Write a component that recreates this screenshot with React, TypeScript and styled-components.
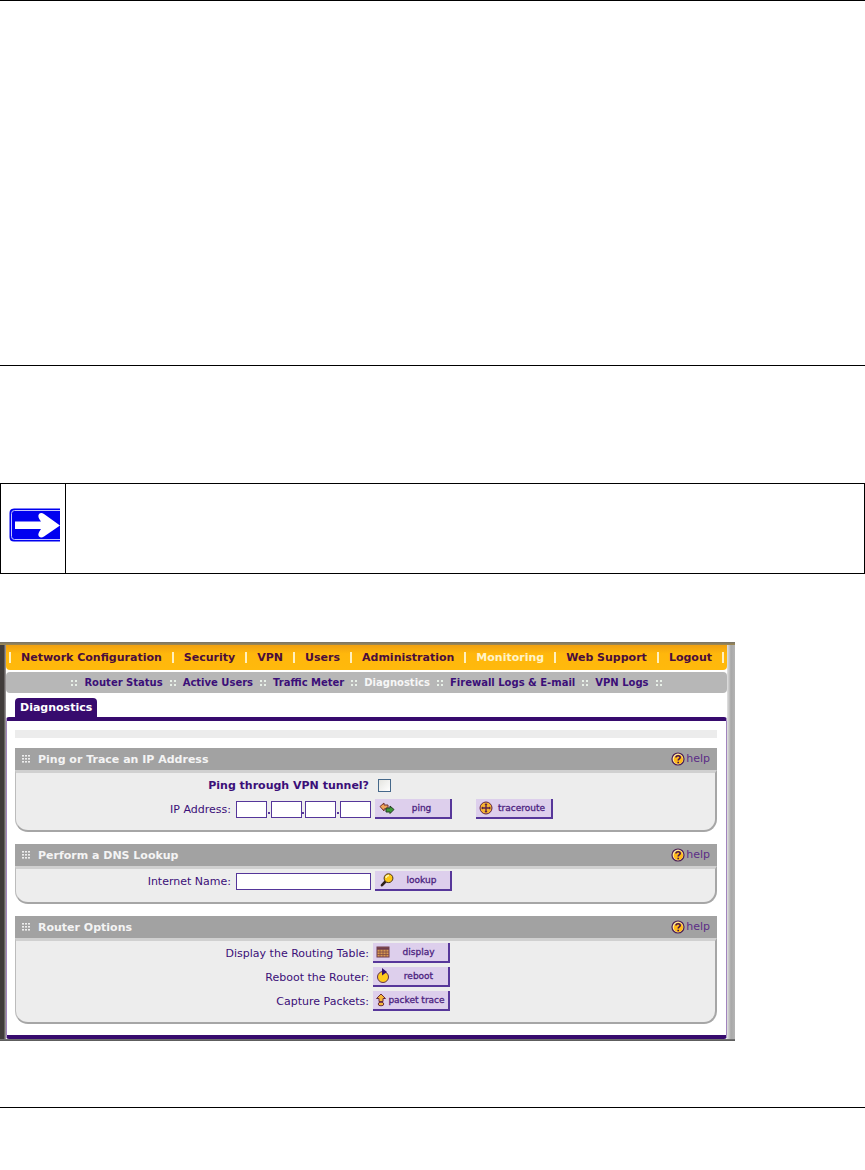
import React from "react";
import styled, { createGlobalStyle } from "styled-components";

const purple = "#3b0f78";
const deepPurple = "#370b6e";
const sans = `Verdana, "DejaVu Sans", sans-serif`;

const GlobalStyle = createGlobalStyle`
  *, *::before, *::after { box-sizing: border-box; }
  body { margin: 0; background: #fff; font-family: ${sans}; font-size: 11px; line-height: 16px; color: ${purple}; }
`;

const Page = styled.main`
  display: flex;
  flex-direction: column;
  padding-bottom: 62px;
`;

const Rule = styled.hr<{ $before?: number }>`
  width: 100%;
  height: 1px;
  margin: ${(p) => p.$before ?? 0}px 0 0;
  border: 0;
  background: #000;
`;

const Note = styled.aside`
  display: grid;
  grid-template-columns: 65px 1fr;
  min-height: 91px;
  margin-top: 117px;
  border: 1px solid #000;
`;

const NoteIcon = styled.div`
  display: flex;
  align-items: center;
  padding-left: 8px;
  padding-bottom: 6px;
  border-right: 1px solid #000;
`;

const Frame = styled.section`
  width: 100%;
  max-width: 735px;
  margin-top: 68px;
  padding: 3px 8px 2px 6px;
  background:
    linear-gradient(#777268, #a08a50) top / 100% 3px no-repeat,
    linear-gradient(#777, #555) bottom / 100% 2px no-repeat,
    linear-gradient(90deg, #e2e2e2, #a8a8a8 50%, #b4b4b4) right / 8px 100% no-repeat,
    linear-gradient(90deg, #403c3a 60%, #a8a4a6) left / 6px 100% no-repeat,
    #fff;
`;

const MainNav = styled.nav`
  display: flex;
  align-items: center;
  justify-content: space-between;
  height: 25px;
  padding: 0 3px;
  background: linear-gradient(#f0a010, #ffb70c 35%, #ffb90c);
  border-radius: 0 0 4px 4px;
`;

const Divider = styled.span`
  width: 2px;
  height: 11px;
  background: #fff0c0;
`;

const NavLink = styled.a<{ $active?: boolean }>`
  font-size: 11px;
  font-weight: bold;
  line-height: 16px;
  white-space: nowrap;
  text-decoration: none;
  color: ${(p) => (p.$active ? "#fff3c8" : "#4a0d3c")};
`;

const SubNav = styled.nav`
  display: flex;
  align-items: center;
  justify-content: center;
  gap: 6px;
  height: 21px;
  margin-top: 2px;
  background: #b7b7b7;
  border-radius: 4px;
`;

const SubLink = styled.a<{ $active?: boolean }>`
  font-size: 10px;
  font-weight: bold;
  line-height: 16px;
  white-space: nowrap;
  text-decoration: none;
  color: ${(p) => (p.$active ? "#f6f6f6" : purple)};
`;

const TabRow = styled.div`
  display: flex;
  padding: 5px 9px 0;
  background: #fff;
`;

const Tab = styled.h1`
  margin: 0;
  padding: 2px 5px 1px;
  border-radius: 4px 4px 0 0;
  background: ${deepPurple};
  color: #fff;
  font-size: 11px;
  line-height: 16px;
`;

const Content = styled.div`
  display: flex;
  flex-direction: column;
  gap: 12px;
  padding: 9px 9px 11px 8px;
  background: #fff;
  border: solid #a184bd;
  border-width: 0 1px;
  border-top: 4px solid ${deepPurple};
  border-bottom: 4px solid ${deepPurple};
  border-radius: 3px;
`;

const Strip = styled.div`
  height: 8px;
  margin-bottom: -2px;
  background: #ececec;
`;

const PanelHead = styled.header`
  display: flex;
  align-items: center;
  gap: 8px;
  height: 22px;
  padding: 0 7px;
  background: #a2a2a2;
`;

const PanelTitle = styled.h2`
  flex: 1;
  margin: 0;
  padding-top: 2px;
  color: #f4f4f4;
  font-size: 11px;
  line-height: 16px;
`;

const HelpLink = styled.a`
  display: flex;
  align-items: center;
  gap: 1px;
  color: #5b2d86;
  font-size: 11px;
  text-decoration: none;
`;

const PanelBody = styled.form`
  padding-bottom: 9px;
  background: #ededed;
  border-style: solid;
  border-width: 3px 2px 2px 1px;
  border-color: #d0d0d0 #a6a6a6 #a6a6a6 #bcbcbc;
  border-radius: 0 0 13px 13px;
`;

const Row = styled.div`
  display: flex;
  align-items: center;
  height: 24px;
`;

const Label = styled.label<{ $wide?: boolean; $strong?: boolean }>`
  flex: 0 0 ${(p) => (p.$wide ? 353 : 215)}px;
  padding-top: 2px;
  text-align: right;
  font-weight: ${(p) => (p.$strong ? "bold" : "normal")};
`;

const Check = styled.input`
  appearance: none;
  width: 13px;
  height: 13px;
  margin: 0 0 0 9px;
  border: 1px solid #45688a;
  background: linear-gradient(135deg, #e4e4e0, #fff);
`;

const Fields = styled.fieldset`
  display: flex;
  align-items: flex-end;
  justify-content: space-between;
  width: 135px;
  margin: 0 0 0 5px;
  padding: 0;
  border: 0;
`;

const TextBox = styled.input<{ $octet?: boolean }>`
  width: ${(p) => (p.$octet ? "31px" : "100%")};
  height: 17px;
  padding: 0 2px;
  border: 1px solid #55369a;
  border-radius: 0;
  background: #fff;
  color: ${purple};
  font: 11px ${sans};
`;

const Dot = styled.span`
  width: 2px;
  height: 2px;
  margin-bottom: 4px;
  background: #55369a;
`;

const Button = styled.button<{ $before?: number }>`
  display: flex;
  align-items: center;
  width: 77px;
  height: 20px;
  margin: 0 0 0 ${(p) => p.$before ?? 4}px;
  padding: 0 2px;
  border: solid #57379a;
  border-width: 0 2px 2px 0;
  background: #ddcfec;
  color: #4c2380;
  font: 9px ${sans};
  white-space: nowrap;
`;

const ButtonText = styled.span`
  flex: 1;
  text-align: center;
  -webkit-text-stroke: 0.3px currentColor;
`;

const Dots = () => (
  <svg width="8" height="11" viewBox="0 0 8 11" fill="#e8f0e8" aria-hidden="true">
    {[1, 5].map((x) => [3, 7].map((y) => <rect key={`${x}-${y}`} x={x} y={y} width="2" height="2" />))}
  </svg>
);

const Grip = () => (
  <svg width="8" height="9" viewBox="0 0 8 9" fill="#eee" aria-hidden="true">
    {[0, 3, 6].map((x) => [0, 3, 6].map((y) => <rect key={`${x}-${y}`} x={x} y={y} width="2" height="1.6" />))}
  </svg>
);

const HelpIcon = () => (
  <svg width="14" height="14" viewBox="0 0 14 14" aria-hidden="true">
    <circle cx="7" cy="7" r="6" fill="#ffe9a0" stroke="#4b1e55" strokeWidth="1.2" />
    <circle cx="7.4" cy="7.4" r="4.6" fill="#ffb919" />
    <path d="M5 5.4C5 3.2 9.2 3.2 9.2 5.5C9.2 7 7.2 6.8 7.2 8.4M7.2 9.7v1.5" fill="none" stroke="#43104c" strokeWidth="1.6" />
  </svg>
);

const PingIcon = () => (
  <svg width="18" height="14" viewBox="0 0 18 14" aria-hidden="true">
    <path d="M3 5.500L7 2v2h4v4H7v2z" fill="#f0a55a" stroke="#71312c" />
    <path d="M17 8.500L13 5v2H9v4h4v1.500z" fill="#3d9935" stroke="#253c24" />
  </svg>
);

const TraceIcon = () => (
  <svg width="16" height="14" viewBox="0 0 16 14" aria-hidden="true">
    <circle cx="8" cy="7" r="6" fill="#f6b431" stroke="#5c2347" />
    <path d="M8 3v8M4 7h8" stroke="#5c2347" strokeWidth="1.4" />
    <path d="M8 2L6.500 4h3zM8 12L6.500 10h3zM3 7l2-1.500v3zM13 7l-2-1.500v3z" fill="#5c2347" />
  </svg>
);

const LookupIcon = () => (
  <svg width="18" height="14" viewBox="0 0 18 14" aria-hidden="true">
    <path d="M8.500 8.500L5 12.200" stroke="#302018" strokeWidth="2.600" strokeLinecap="round" />
    <circle cx="11.500" cy="5.200" r="4.400" fill="#fcc817" stroke="#45301f" />
    <path d="M9 5a2.600 2.600 0 0 1 3-2.500" fill="none" stroke="#fff7ae" strokeWidth="1.500" />
  </svg>
);

const TableIcon = () => (
  <svg width="16" height="14" viewBox="0 0 16 14" aria-hidden="true">
    <rect x="2" y="2" width="12" height="10" fill="#d99a50" stroke="#6e3b4c" />
    <path d="M2 3.500h12" stroke="#6e3b4c" strokeWidth="2.500" />
    <path d="M5 4v8M8 4v8M11 4v8M2 7h12M2 9.500h12" stroke="#7d4a45" strokeWidth=".8" />
  </svg>
);

const RebootIcon = () => (
  <svg width="16" height="16" viewBox="0 0 16 16" aria-hidden="true">
    <circle cx="8" cy="9" r="5.500" fill="#ffcb1e" stroke="#5d3155" />
    <path d="M7 0v7.500L12 4z" fill="#34116d" />
  </svg>
);

const PacketIcon = () => (
  <svg width="12" height="14" viewBox="0 0 12 14" aria-hidden="true">
    <path d="M6 1L1.500 5.500H4v3h4v-3h2.500z" fill="#f6b73a" stroke="#6b2d3c" />
    <ellipse cx="6" cy="11" rx="2.800" ry="1.800" fill="#f6b73a" stroke="#6b2d3c" />
  </svg>
);

const ArrowSign = () => (
  <svg width="51" height="35" viewBox="0 0 51 35" role="img" aria-label="Note">
    <path d="M51 .500H5Q.500.500.500 5v24q0 4.500 4.500 4.500H51z" fill="#0000f0" />
    <path d="M51 2.500H5.500Q2.500 2.500 2.500 5.500v23q0 3 3 3H51" fill="none" stroke="#c4c4ff" />
    <path d="M6 13.500h26q-4-5-2-7.500 2-2 5 0L51 17.500 35 28.500q-3 2-5 0-2-2 2-7.500H6z" fill="#fff" />
  </svg>
);

const mainItems = ["Network Configuration", "Security", "VPN", "Users", "Administration", "Monitoring", "Web Support", "Logout"];
const subItems = ["Router Status", "Active Users", "Traffic Meter", "Diagnostics", "Firewall Logs & E-mail", "VPN Logs"];

function Panel({ title, children }: { title: string; children: React.ReactNode }) {
  return (
    <section>
      <PanelHead>
        <Grip />
        <PanelTitle>{title}</PanelTitle>
        <HelpLink href="#help"><HelpIcon />help</HelpLink>
      </PanelHead>
      <PanelBody onSubmit={(e) => e.preventDefault()}>{children}</PanelBody>
    </section>
  );
}

function Action({ icon, label, id, before }: { icon: React.ReactNode; label: string; id?: string; before?: number }) {
  return (
    <Button type="button" id={id} $before={before}>
      {icon}
      <ButtonText>{label}</ButtonText>
    </Button>
  );
}

export default function App() {
  return (
    <>
      <GlobalStyle />
      <Page>
        <Rule />
        <Rule $before={364} />
        <Note>
          <NoteIcon><ArrowSign /></NoteIcon>
        </Note>
        <Frame>
          <MainNav>
            <Divider />
            {mainItems.map((item) => (
              <React.Fragment key={item}>
                <NavLink href="#" $active={item === "Monitoring"}>{item}</NavLink>
                <Divider />
              </React.Fragment>
            ))}
          </MainNav>
          <SubNav>
            <Dots />
            {subItems.map((item) => (
              <React.Fragment key={item}>
                <SubLink href="#" $active={item === "Diagnostics"}>{item}</SubLink>
                <Dots />
              </React.Fragment>
            ))}
          </SubNav>
          <TabRow><Tab>Diagnostics</Tab></TabRow>
          <Content>
            <Strip />
            <Panel title="Ping or Trace an IP Address">
              <Row>
                <Label $wide $strong htmlFor="tunnel">Ping through VPN tunnel?</Label>
                <Check type="checkbox" id="tunnel" />
              </Row>
              <Row>
                <Label htmlFor="octet1">IP Address:</Label>
                <Fields>
                  <TextBox $octet id="octet1" aria-label="IP address part 1" />
                  <Dot />
                  <TextBox $octet aria-label="IP address part 2" />
                  <Dot />
                  <TextBox $octet aria-label="IP address part 3" />
                  <Dot />
                  <TextBox $octet aria-label="IP address part 4" />
                </Fields>
                <Action icon={<PingIcon />} label="ping" />
                <Action icon={<TraceIcon />} label="traceroute" before={24} />
              </Row>
            </Panel>
            <Panel title="Perform a DNS Lookup">
              <Row>
                <Label htmlFor="host">Internet Name:</Label>
                <Fields><TextBox id="host" /></Fields>
                <Action icon={<LookupIcon />} label="lookup" />
              </Row>
            </Panel>
            <Panel title="Router Options">
              <Row>
                <Label $wide htmlFor="display">Display the Routing Table:</Label>
                <Action id="display" icon={<TableIcon />} label="display" />
              </Row>
              <Row>
                <Label $wide htmlFor="reboot">Reboot the Router:</Label>
                <Action id="reboot" icon={<RebootIcon />} label="reboot" />
              </Row>
              <Row>
                <Label $wide htmlFor="packets">Capture Packets:</Label>
                <Action id="packets" icon={<PacketIcon />} label="packet trace" />
              </Row>
            </Panel>
          </Content>
        </Frame>
        <Rule $before={66} />
      </Page>
    </>
  );
}
